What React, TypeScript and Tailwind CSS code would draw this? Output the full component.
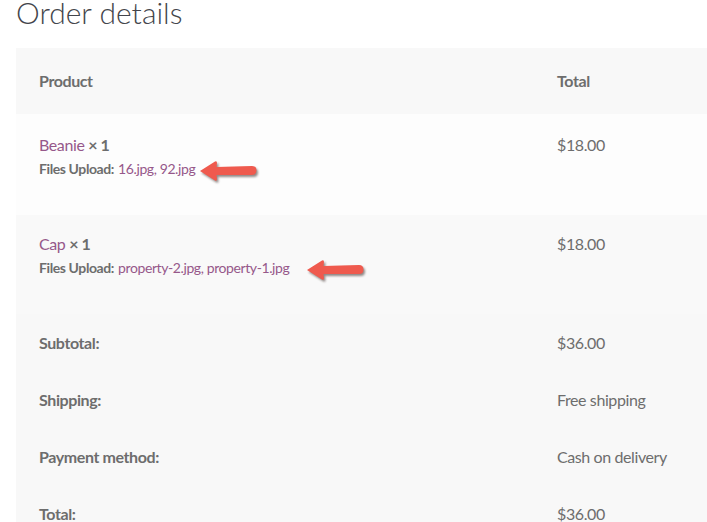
import React from "react";

const Arrow = () => (
  <svg width="62" height="26" viewBox="0 0 62 26" className="shrink-0">
    <defs>
      <filter id="sh" x="-20%" y="-40%" width="140%" height="180%">
        <feGaussianBlur stdDeviation="1.2" />
      </filter>
    </defs>
    <path
      d="M2 12 L17 2.5 Q19 1.5 19 4 L18.5 8 L54 7 Q58.5 7 58.5 11.5 Q58.5 16 54 16 L18.5 16 L19 20 Q19 22.5 17 21.5 Z"
      fill="#3a2a25"
      opacity="0.55"
      filter="url(#sh)"
      transform="translate(1.5,2)"
    />
    <path
      d="M2 12 L17 2.5 Q19 1.5 19 4 L18.5 8 L54 7 Q58.5 7 58.5 11.5 Q58.5 16 54 16 L18.5 16 L19 20 Q19 22.5 17 21.5 Z"
      fill="#ef5a4e"
    />
  </svg>
);

const font = { fontFamily: "Lato, 'Open Sans', sans-serif" };

export default function App() {
  return (
    <div className="w-[707px] h-[522px] overflow-hidden bg-white text-[#6d6d6d] tracking-[-0.025em]" style={font}>
      <h2 className="ml-[16px] -mt-[8px] h-[56px] text-[30px] font-light leading-[40px] tracking-normal text-[#43454b]">
        Order details
      </h2>
      <div className="ml-[16px] w-[691px]">
        {/* header */}
        <div className="flex h-[66px] items-center bg-[#f8f8f8] text-[16px] font-bold">
          <div className="w-[518px] pl-[23px]">Product</div>
          <div className="flex-1 pl-[23px]">Total</div>
        </div>
        {/* row 1 */}
        <div className="flex h-[101px] bg-[#fdfdfd] pt-[19px]">
          <div className="w-[518px] pl-[23px]">
            <div className="text-[16px] leading-[24px]">
              <span className="text-[#96588a]">Beanie</span>{" "}
              <strong className="font-bold">× 1</strong>
            </div>
            <div className="flex h-[24px] items-center text-[14px] leading-[24px]">
              <strong className="font-bold">Files Upload:</strong>
              <span className="ml-[4px] text-[#96588a]">16.jpg, 92.jpg</span>
              <span className="ml-[3px] -my-[4px] mt-[2px] flex">
                <Arrow />
              </span>
            </div>
          </div>
          <div className="flex-1 pl-[23px] text-[16px] leading-[24px]">$18.00</div>
        </div>
        {/* row 2 */}
        <div className="flex h-[99px] bg-[#f9f9f9] pt-[17px]">
          <div className="w-[518px] pl-[23px]">
            <div className="text-[16px] leading-[24px]">
              <span className="text-[#96588a]">Cap</span>{" "}
              <strong className="font-bold">× 1</strong>
            </div>
            <div className="flex h-[24px] items-center text-[14px] leading-[24px]">
              <strong className="font-bold">Files Upload:</strong>
              <span className="ml-[4px] text-[#96588a]">property-2.jpg, property-1.jpg</span>
              <span className="ml-[16px] -my-[4px] mt-[2px] flex">
                <Arrow />
              </span>
            </div>
          </div>
          <div className="flex-1 pl-[23px] text-[16px] leading-[24px]">$18.00</div>
        </div>
        {/* footer */}
        <div className="bg-[#f8f8f8] text-[16px]">
          {[
            ["Subtotal:", "$36.00"],
            ["Shipping:", "Free shipping"],
            ["Payment method:", "Cash on delivery"],
            ["Total:", "$36.00"],
          ].map(([k, v]) => (
            <div key={k} className="flex h-[57px] items-center">
              <div className="w-[518px] pl-[23px] font-bold">{k}</div>
              <div className="flex-1 pl-[23px]">{v}</div>
            </div>
          ))}
        </div>
      </div>
    </div>
  );
}
